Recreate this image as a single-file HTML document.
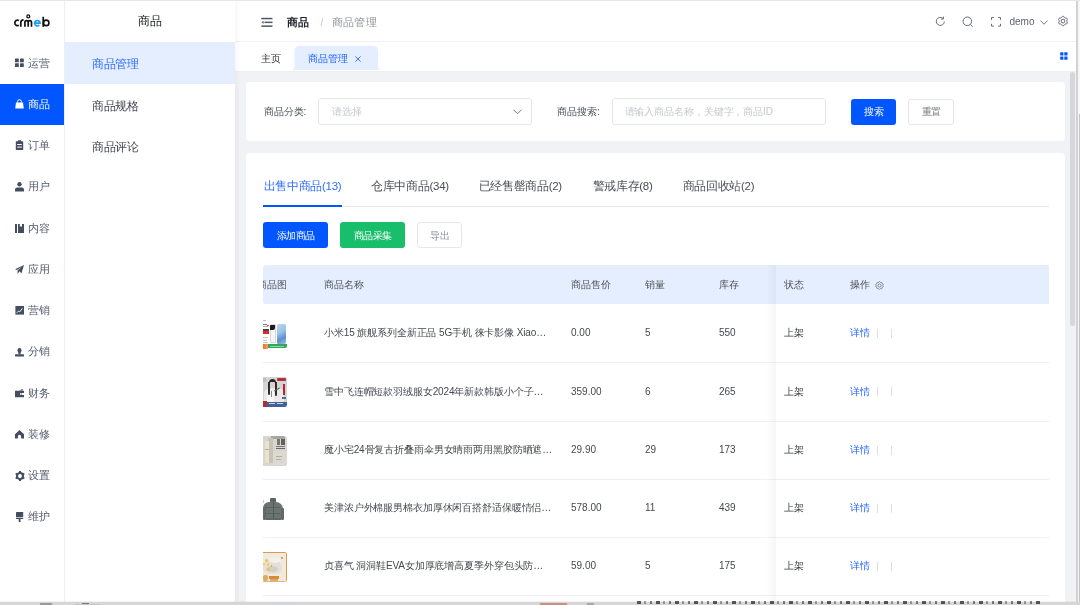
<!DOCTYPE html>
<html><head><meta charset="utf-8">
<style>
*{box-sizing:border-box;margin:0;padding:0}
html,body{width:1080px;height:605px;overflow:hidden;background:#f0f2f5;font-family:"Liberation Sans",sans-serif;color:#303133}
.a{position:absolute;white-space:nowrap;line-height:1}
#topline{position:absolute;left:0;top:0;width:1080px;height:1px;background:#e6e7e7;z-index:50}
#rail{position:absolute;left:0;top:0;width:65px;height:605px;background:#fff;border-right:1px solid #eef0f3}
#rail .it{position:absolute;left:0;width:64px;height:41.25px;color:#454d60;font-size:11px}
#rail .it.on{background:#0256ff;color:#fff}
#rail .it svg{position:absolute;left:15px;top:16px}
#rail .it span{position:absolute;left:28px;top:15.5px;line-height:11px;color:#535b6e}
#rail .it.on span{color:#fff}
#sub{position:absolute;left:65px;top:0;width:170px;height:605px;background:#fff;box-shadow:2px 0 5px rgba(0,0,0,.045);z-index:5}
#sub .t{position:absolute;left:0;top:15px;width:170px;text-align:center;font-size:12px;color:#15171a;line-height:12px}
#sub .m{position:absolute;left:0;width:170px;height:41.5px;font-size:11.5px;color:#40454e}
#sub .m span{position:absolute;left:27px;top:16px;line-height:12px;letter-spacing:-0.3px}
#sub .m.on{background:#e5eefe;color:#2d6cff}
#hdr{position:absolute;left:235px;top:1px;width:841px;height:41px;background:#fff;border-bottom:1px solid #f0f1f3}
#tabs{position:absolute;left:235px;top:42px;width:841px;height:28.6px;background:#fff;box-shadow:0 1px 2px rgba(0,0,0,.025)}
#rscroll{position:absolute;left:1076px;top:0;width:4px;height:605px;background:#f7f7f7;border-left:2px solid #d2d2d2}
#othumb{position:absolute;left:1078.8px;top:114px;width:1.2px;height:491px;background:#c4c4c4}
#thumb{position:absolute;left:1070px;top:72px;width:5px;height:254px;border-radius:3px;background:#d5d7dc}
.card{position:absolute;left:246px;width:819px;background:#fff;border-radius:4px}
.th{top:14.5px;font-size:10px;color:#50535a}
.row{left:0;width:785.5px;height:59.3px;border-bottom:1px solid #edf0f5}
.td{top:24.3px;font-size:10px;color:#45484e}
.nm{letter-spacing:-.12px}
.lk{color:#1f62ff}
.pipe{top:25px;width:1px;height:9px;background:#dcdfe6}
.img{position:absolute;left:-5.6px;top:15px;width:30px;height:30px;border-radius:2px;overflow:hidden;background:#fff}
.img b{position:absolute;display:block}
#bottom{position:absolute;left:0;top:601px;width:1080px;height:4px;background:linear-gradient(to bottom,rgba(216,216,216,.35) 0,rgba(216,216,216,.35) 1.5px,#d6d6d6 1.5px);z-index:60}
#rail,#sub,#hdr,#tabs,.card{will-change:transform}
</style></head><body>
<div id="topline"></div>

<div id="rail">
  <svg class="a" style="left:0;top:0" width="65" height="42" viewBox="0 0 65 42" fill="none" stroke-width="1.7">
    <path d="M18.9 20.5 A2.75 2.75 0 1 0 18.9 25.3" stroke="#111"/>
    <path d="M20.8 26.8 V22.6 Q20.8 19.95 23.6 19.95" stroke="#111"/>
    <path d="M24.9 26.8 V22.2 A1.65 1.65 0 0 1 28.2 22.2 V26.8 M28.2 22.2 A1.65 1.65 0 0 1 31.5 22.2 V26.8" stroke="#111"/>
    <circle cx="28.3" cy="16.4" r="1.45" stroke="#111" stroke-width="1.3"/>
    <path d="M34.6 23.1 H40.1 A2.75 2.75 0 1 0 39.3 25.2" stroke="#1c9ef1"/>
    <path d="M43.2 16.8 V26.8" stroke="#111"/>
    <circle cx="46.2" cy="22.9" r="2.7" stroke="#111"/>
  </svg>
  <div class="it" style="top:42px"><svg width="9" height="9" viewBox="0 0 9 9" fill="currentColor"><rect x="0" y="0.5" width="3.8" height="3.8" rx=".4"/><rect x="5" y="0.5" width="3.8" height="3.8" rx=".4"/><rect x="0" y="5.3" width="3.8" height="3.8" rx=".4"/><rect x="5" y="5.3" width="3.8" height="3.8" rx=".4"/></svg><span>运营</span></div>
  <div class="it on" style="top:83.6px;height:41px"><svg width="9" height="10" viewBox="0 0 9 10" fill="currentColor" style="top:15.5px"><path d="M2.6 3.6 V2.6 A1.9 1.9 0 0 1 6.4 2.6 V3.6" fill="none" stroke="#fff" stroke-width="1"/><path d="M1 3.6 H8 L8.8 9.6 H0.2 Z"/></svg><span>商品</span></div>
  <div class="it" style="top:124.5px"><svg width="9" height="10" viewBox="0 0 9 10" fill="currentColor" style="top:15.5px"><path d="M3 0.2 H6 V1.2 H7.6 Q8.2 1.2 8.2 1.8 V9.4 Q8.2 10 7.6 10 H1.4 Q0.8 10 0.8 9.4 V1.8 Q0.8 1.2 1.4 1.2 H3 Z"/><rect x="2.2" y="4" width="4.6" height="1" fill="#fff"/><rect x="2.2" y="6.6" width="4.6" height="1" fill="#fff"/></svg><span>订单</span></div>
  <div class="it" style="top:165.75px"><svg width="9" height="10" viewBox="0 0 9 10" fill="currentColor" style="top:16px"><circle cx="4.5" cy="2.3" r="2.2"/><path d="M0 9.4 V7.6 Q0 5.6 2.2 5.6 H6.8 Q9 5.6 9 7.6 V9.4 Z"/></svg><span>用户</span></div>
  <div class="it" style="top:207px"><svg width="9" height="9" viewBox="0 0 9 9" fill="currentColor" style="top:16.5px"><rect x="0" y="0" width="2" height="9"/><path d="M3 0 H4.8 V3 L5.9 2 L7 3 V0 H9 V9 H3 Z"/></svg><span>内容</span></div>
  <div class="it" style="top:248.25px"><svg width="9" height="9" viewBox="0 0 9 9" fill="currentColor" style="top:16.8px"><path d="M0 4.2 L9 0 L6.4 8.6 L4.6 6.2 L2.4 9 L2.6 5.6 L7.2 1.6 L2 4.9 Z"/></svg><span>应用</span></div>
  <div class="it" style="top:289.5px"><svg width="9" height="9" viewBox="0 0 9 9" style="top:16.8px"><rect x="0.4" y="0" width="8.6" height="8.6" fill="currentColor"/><path d="M1.8 6.8 L3.6 5 L4.8 5.8 L7.4 2.4" stroke="#fff" stroke-width=".9" fill="none"/></svg><span>营销</span></div>
  <div class="it" style="top:330.75px"><svg width="9" height="9" viewBox="0 0 9 9" fill="currentColor" style="top:16.8px"><ellipse cx="4.5" cy="2.4" rx="2" ry="2.4"/><rect x="3.4" y="4" width="2.2" height="2.4"/><rect x="0" y="6.2" width="9" height="2.4" rx=".5"/></svg><span>分销</span></div>
  <div class="it" style="top:372px"><svg width="9" height="9" viewBox="0 0 9 9" fill="currentColor" style="top:17px"><path d="M4 1.6 L7.5 0 L8 1.6 Z"/><path d="M0 1.8 H9 V8.2 H0 Z M6 4 Q5 4 5 5 Q5 6 6 6 H9 V4 Z" fill-rule="evenodd"/><circle cx="6.5" cy="5" r=".6"/></svg><span>财务</span></div>
  <div class="it" style="top:413.25px"><svg width="9" height="9" viewBox="0 0 9 9" fill="currentColor" style="top:16.5px"><path d="M4.5 0 L9 4.2 V8.6 H6.1 V6.4 A1.6 1.6 0 0 0 2.9 6.4 V8.6 H0 V4.2 Z"/></svg><span>装修</span></div>
  <div class="it" style="top:454.5px"><svg width="10" height="10" viewBox="0 0 10 10" style="top:16.3px;left:14.6px"><circle cx="5" cy="5" r="3" stroke="currentColor" stroke-width="2.1" fill="none"/><g fill="currentColor"><rect x="4" y="0" width="2" height="2"/><rect x="4" y="8" width="2" height="2"/><rect x="4" y="0" width="2" height="2" transform="rotate(60 5 5)"/><rect x="4" y="8" width="2" height="2" transform="rotate(60 5 5)"/><rect x="4" y="0" width="2" height="2" transform="rotate(120 5 5)"/><rect x="4" y="8" width="2" height="2" transform="rotate(120 5 5)"/></g></svg><span>设置</span></div>
  <div class="it" style="top:495.75px"><svg width="8" height="10" viewBox="0 0 8 10" fill="currentColor" style="top:16.3px;left:16px"><rect x="0" y="0" width="7.2" height="5.2" rx=".4"/><rect x="0" y="5.9" width="7.2" height="1.1"/><rect x="2.7" y="7" width="1.8" height="3"/></svg><span>维护</span></div>
</div>

<div id="sub">
  <div class="t">商品</div>
  <div class="m on" style="top:42px"><span>商品管理</span></div>
  <div class="m" style="top:83.5px"><span>商品规格</span></div>
  <div class="m" style="top:125px"><span>商品评论</span></div>
</div>

<div id="hdr">
  <svg class="a" style="left:26px;top:16px" width="12" height="11" viewBox="0 0 12 11" fill="#4e5969"><rect x="0.3" y="0.8" width="11.2" height="1.5"/><rect x="3.5" y="4.6" width="8" height="1.5"/><path d="M0.3 5.35 L2.6 3.9 V6.8 Z"/><rect x="0.3" y="8.4" width="11.2" height="1.5"/></svg>
  <span class="a" style="left:52px;top:16px;font-size:11px;font-weight:bold;color:#1d2129">商品</span>
  <span class="a" style="left:85.5px;top:16.5px;font-size:10px;color:#c0c4cc">/</span>
  <span class="a" style="left:96.5px;top:16px;font-size:11px;color:#909399;letter-spacing:.35px">商品管理</span>
  <svg class="a" style="left:699.5px;top:15.2px" width="11" height="11" viewBox="0 0 11 11" fill="none" stroke="#5f6671" stroke-width=".95"><path d="M9.3 5.5 A4 4 0 1 1 7.9 2.4"/><path d="M8.4 0.6 V3 H6" /></svg>
  <svg class="a" style="left:727.2px;top:14.8px" width="12" height="12" viewBox="0 0 12 12" fill="none" stroke="#5f6671" stroke-width=".95"><circle cx="5.3" cy="5.3" r="4.3"/><path d="M8.4 8.4 L10.6 10.6"/></svg>
  <svg class="a" style="left:755.8px;top:15.8px" width="11" height="10" viewBox="0 0 11 10" fill="none" stroke="#5f6671" stroke-width=".95"><path d="M0.5 2.8 V0.5 H2.8 M7.2 0.5 H9.5 V2.8 M9.5 6.8 V9.1 H7.2 M2.8 9.1 H0.5 V6.8"/></svg>
  <span class="a" style="left:774.5px;top:15.5px;font-size:10px;color:#5c6470">demo</span>
  <svg class="a" style="left:804.5px;top:18.5px" width="8" height="5" viewBox="0 0 8 5" fill="none" stroke="#5f6671" stroke-width=".85"><path d="M0.4 0.5 L4 4.2 L7.6 0.5"/></svg>
  <svg class="a" style="left:821.5px;top:14.3px" width="12" height="12" viewBox="0 0 12 12" fill="none" stroke="#5f6671" stroke-width=".95" stroke-linejoin="round"><path d="M5.38 1.34 L6.62 1.34 L7.47 2.49 L8.34 3.00 L9.77 3.16 L10.39 4.23 L9.82 5.55 L9.82 6.55 L10.39 7.87 L9.77 8.94 L8.34 9.10 L7.47 9.61 L6.62 10.76 L5.38 10.76 L4.53 9.61 L3.66 9.10 L2.23 8.94 L1.61 7.87 L2.18 6.55 L2.18 5.55 L1.61 4.23 L2.23 3.16 L3.66 3.00 L4.53 2.49 Z"/><circle cx="6" cy="6.05" r="1.9"/></svg>
</div>
<div id="tabs">
  <span class="a" style="left:25.6px;top:11.8px;font-size:10px;color:#303133">主页</span>
  <svg class="a" style="left:56px;top:3px" width="92" height="25" viewBox="0 0 92 25"><path d="M0 25 Q3 25 3.5 21 V6 Q3.5 0.8 9 0.8 H81.5 Q87 0.8 87 6 V21 Q87.5 25 91 25 Z" fill="#e5eefe"/></svg>
  <span class="a" style="left:72.8px;top:11.8px;font-size:10px;color:#2263ff">商品管理</span>
  <svg class="a" style="left:120px;top:13.5px" width="6" height="6" viewBox="0 0 6 6" stroke="#2d6cff" stroke-width=".9"><path d="M0.4 0.4 L5.6 5.6 M5.6 0.4 L0.4 5.6"/></svg>
  <svg class="a" style="left:824.5px;top:9.5px" width="8" height="8" viewBox="0 0 8 8" fill="#0256ff"><rect x="0.2" y="0.3" width="3.2" height="3.2" rx=".5"/><rect x="4.3" y="0.3" width="3.2" height="3.2" rx=".5"/><rect x="0.2" y="4.5" width="3.2" height="3.2" rx=".5"/><rect x="4.3" y="4.5" width="3.2" height="3.2" rx=".5"/></svg>
</div>

<div class="card" style="top:82px;height:59px">
  <span class="a" style="left:17.5px;top:24.5px;font-size:10px;color:#484d57">商品分类:</span>
  <div class="a" style="left:71.5px;top:16px;width:214px;height:26.5px;border:1px solid #e5e7eb;border-radius:3px"></div>
  <span class="a" style="left:85.5px;top:24.5px;font-size:10px;color:#c5c8ce">请选择</span>
  <svg class="a" style="left:267px;top:26.5px" width="9" height="6" viewBox="0 0 9 6" fill="none" stroke="#6b717c" stroke-width=".9"><path d="M0.4 0.6 L4.5 4.8 L8.6 0.6"/></svg>
  <span class="a" style="left:311px;top:24.5px;font-size:10px;color:#484d57">商品搜索:</span>
  <div class="a" style="left:365.5px;top:16px;width:214px;height:26.5px;border:1px solid #e5e7eb;border-radius:3px"></div>
  <span class="a" style="left:378.5px;top:24.5px;font-size:10px;color:#c5c8ce;letter-spacing:-.1px">请输入商品名称，关键字，商品ID</span>
  <div class="a" style="left:604.5px;top:17px;width:45.5px;height:25.8px;background:#0256ff;border-radius:3px"></div>
  <span class="a" style="left:618px;top:25px;font-size:10px;color:#fff;letter-spacing:-.4px">搜索</span>
  <div class="a" style="left:662px;top:17px;width:45.5px;height:25.8px;border:1px solid #e5e7eb;border-radius:3px"></div>
  <span class="a" style="left:675.5px;top:25px;font-size:10px;color:#73777e;letter-spacing:-.5px">重置</span>
</div>
<div class="card" style="top:153px;height:460px;overflow:hidden">
  <span class="a" style="left:17.5px;top:27.5px;font-size:11.5px;color:#2d6cff;letter-spacing:-.3px">出售中商品(13)</span>
  <span class="a" style="left:125px;top:27.5px;font-size:11.5px;color:#4b4e55;letter-spacing:-.3px">仓库中商品(34)</span>
  <span class="a" style="left:232.5px;top:27.5px;font-size:11.5px;color:#4b4e55;letter-spacing:-.3px">已经售罄商品(2)</span>
  <span class="a" style="left:346.5px;top:27.5px;font-size:11.5px;color:#4b4e55;letter-spacing:-.3px">警戒库存(8)</span>
  <span class="a" style="left:436.5px;top:27.5px;font-size:11.5px;color:#4b4e55;letter-spacing:-.3px">商品回收站(2)</span>
  <div class="a" style="left:17px;top:52.5px;width:785.5px;height:1px;background:#e4e7ed"></div>
  <div class="a" style="left:17px;top:52px;width:79px;height:2px;background:#0256ff"></div>
  <div class="a" style="left:17px;top:69px;width:65.2px;height:26px;background:#0256ff;border-radius:3px"></div>
  <span class="a" style="left:30.5px;top:78.3px;font-size:10px;color:#fff;letter-spacing:-.35px">添加商品</span>
  <div class="a" style="left:94px;top:69px;width:65.2px;height:26px;background:#19be6b;border-radius:3px"></div>
  <span class="a" style="left:107.5px;top:78.3px;font-size:10px;color:#fff;letter-spacing:-.35px">商品采集</span>
  <div class="a" style="left:171.4px;top:69px;width:45px;height:26px;border:1px solid #e4e7ed;border-radius:3px"></div>
  <span class="a" style="left:184px;top:78.3px;font-size:10px;color:#8a8e96">导出</span>
<div class="a" id="tbl" style="left:17px;top:112px;width:785.5px;height:350px;overflow:hidden">
  <div class="a" style="left:0;top:0;width:785.5px;height:39px;background:#e5eefe;border-radius:3px 0 0 3px"></div>
  <span class="a th" style="left:-6px">商品图</span>
  <span class="a th" style="left:61px">商品名称</span>
  <span class="a th" style="left:308px">商品售价</span>
  <span class="a th" style="left:382px">销量</span>
  <span class="a th" style="left:456px">库存</span>
  <span class="a th" style="left:521px">状态</span>
  <span class="a th" style="left:587px">操作</span>
  <svg class="a" style="left:612px;top:15.5px" width="9" height="9" viewBox="0 0 9 9" fill="none" stroke="#737780" stroke-width=".8"><path d="M4.5 0.5 L5.4 1.4 L6.8 1.3 L7 2.5 L8.3 3.3 L7.8 4.5 L8.3 5.7 L7 6.5 L6.8 7.7 L5.4 7.6 L4.5 8.5 L3.6 7.6 L2.2 7.7 L2 6.5 L0.7 5.7 L1.2 4.5 L0.7 3.3 L2 2.5 L2.2 1.3 L3.6 1.4 Z"/><circle cx="4.5" cy="4.5" r="1.6"/></svg>
  <div class="a row" style="top:39.0px"><div class="img i0"><b style="left:5.6px;top:1px;width:3px;height:1px;background:#bbb"></b><b style="left:5.6px;top:5px;width:4px;height:1px;background:#777"></b><b style="left:5.6px;top:6.5px;width:5px;height:.7px;background:#aaa"></b><b style="left:10px;top:6.3px;width:1.5px;height:1px;background:#e44"></b><b style="left:5.6px;top:9.5px;width:5.5px;height:2.5px;background:#444"></b><b style="left:5.6px;top:12px;width:5.5px;height:2.6px;background:#e2262c"></b><b style="left:5.6px;top:17.5px;width:5px;height:.7px;background:#c4c4c4"></b><b style="left:5.6px;top:20.5px;width:4px;height:.7px;background:#c4c4c4"></b><b style="left:5.6px;top:23px;width:5px;height:.7px;background:#c4c4c4"></b><b style="left:12.6px;top:5.4px;width:6px;height:18.8px;background:#f6f6f6;border:.5px solid #d8d8d8;border-radius:1px"></b><b style="left:12.9px;top:5.9px;width:4.6px;height:5.4px;background:#1b1b1b;border-radius:1px 0 2px 0"></b><b style="left:19.4px;top:4.8px;width:9.3px;height:20px;background:linear-gradient(150deg,#b9d6f2 0%,#9cc3ea 40%,#5c8fd0 70%,#9dc4ea 100%);border-radius:1.5px"></b><b style="left:10.6px;top:25px;width:19.4px;height:4.4px;background:#2fa957;border-radius:0 0 2px 0"></b><b style="left:13px;top:26.7px;width:14px;height:.9px;background:#8fd4a5"></b><b style="left:5.6px;top:24.5px;width:5px;height:5.5px;background:linear-gradient(90deg,#f36f2a,#f7a06a)"></b></div><span class="a td nm" style="left:61px">小米15 旗舰系列全新正品 5G手机 徕卡影像 Xiao…</span><span class="a td" style="left:308px">0.00</span><span class="a td" style="left:382px">5</span><span class="a td" style="left:456px">550</span><span class="a td" style="left:521px;color:#3d4045">上架</span><span class="a td lk" style="left:587px">详情</span><span class="a pipe" style="left:614px"></span><span class="a pipe" style="left:628px"></span></div>
  <div class="a row" style="top:97.3px"><div class="img i1"><b style="left:5.6px;top:0;width:24.4px;height:30px;background:#d3d4d8"></b><b style="left:6px;top:1px;width:2.5px;height:3.5px;background:#bcbdc2"></b><b style="left:7px;top:11px;width:20px;height:17px;background:#eceae8;border-radius:6px 6px 1px 1px"></b><b style="left:10px;top:14px;width:7px;height:11px;background:#f8f8f7;border-radius:2px"></b><b style="left:11.5px;top:1.5px;width:7px;height:6.5px;background:#27272a;border-radius:3.5px 3.5px 0 0"></b><b style="left:10.6px;top:5px;width:2.2px;height:12.5px;background:#2d2d30;border-radius:0 0 1px 1px"></b><b style="left:17.4px;top:5px;width:2.2px;height:13.5px;background:#2d2d30;border-radius:0 0 1px 1px"></b><b style="left:12.8px;top:4.6px;width:4.6px;height:5.2px;background:#e6cbc4;border-radius:1px 1px 2px 2px"></b><b style="left:14px;top:14px;width:1px;height:6px;background:#8a8a8e"></b><b style="left:17px;top:11.5px;width:6px;height:1.2px;background:#5a5a5e;transform:rotate(-30deg)"></b><b style="left:19.8px;top:.8px;width:8.6px;height:2.6px;background:#b8313a;border-radius:1px"></b><b style="left:26px;top:7px;width:1.8px;height:11px;background:#b0282f"></b><b style="left:24.8px;top:19.5px;width:3.6px;height:2.5px;background:#4b6c9e"></b><b style="left:10px;top:25px;width:20px;height:5px;background:#3f6297;border-radius:0 0 2px 0"></b><b style="left:12px;top:26.2px;width:6px;height:1px;background:#c9d3e3"></b><b style="left:20px;top:26.2px;width:6px;height:1px;background:#c9d3e3"></b><b style="left:5.6px;top:24px;width:3.6px;height:6px;background:#b82a30"></b></div><span class="a td nm" style="left:61px">雪中飞连帽短款羽绒服女2024年新款韩版小个子…</span><span class="a td" style="left:308px">359.00</span><span class="a td" style="left:382px">6</span><span class="a td" style="left:456px">265</span><span class="a td" style="left:521px;color:#3d4045">上架</span><span class="a td lk" style="left:587px">详情</span><span class="a pipe" style="left:614px"></span><span class="a pipe" style="left:628px"></span></div>
  <div class="a row" style="top:155.6px"><div class="img i2"><b style="left:5.6px;top:0;width:24.4px;height:30px;background:#d9d6cf;border-radius:0 2.5px 2.5px 0"></b><b style="left:14px;top:0;width:14px;height:3px;background:#aaa69f;border-radius:0 2px 0 0"></b><b style="left:11px;top:2px;width:5px;height:25px;background:#c7c3bb"></b><b style="left:7.2px;top:5px;width:4px;height:22px;background:#ebe2cc"></b><b style="left:7.2px;top:13px;width:4px;height:1px;background:#bfb29a"></b><b style="left:19.5px;top:3.5px;width:3px;height:5.5px;background:#555;opacity:.75"></b><b style="left:23.5px;top:3.5px;width:4px;height:5.5px;background:#444;opacity:.8"></b><b style="left:19px;top:10.5px;width:9px;height:.7px;background:#777"></b><b style="left:19px;top:12px;width:9px;height:.7px;background:#666"></b><b style="left:16px;top:15px;width:14px;height:15px;background:#dcd9d3;border-radius:0 0 2.5px 0"></b><b style="left:19px;top:20px;width:6px;height:.8px;background:#b7ad9d"></b><b style="left:19px;top:23px;width:5px;height:.8px;background:#b7ad9d"></b></div><span class="a td nm" style="left:61px">魔小宅24骨复古折叠雨伞男女晴雨两用黑胶防晒遮…</span><span class="a td" style="left:308px">29.90</span><span class="a td" style="left:382px">29</span><span class="a td" style="left:456px">173</span><span class="a td" style="left:521px;color:#3d4045">上架</span><span class="a td lk" style="left:587px">详情</span><span class="a pipe" style="left:614px"></span><span class="a pipe" style="left:628px"></span></div>
  <div class="a row" style="top:213.9px"><div class="img i3"><b style="left:5.6px;top:6px;width:.6px;height:3px;background:#ccc"></b><b style="left:12.5px;top:4.5px;width:6.5px;height:5px;background:#5e6565;border-radius:1px"></b><b style="left:6px;top:8px;width:20px;height:17.5px;background:#6c7373;border-radius:6px 7px 2px 2px"></b><b style="left:5.8px;top:14px;width:3.2px;height:12px;background:#626969;border-radius:1px"></b><b style="left:23.2px;top:14px;width:3.2px;height:12px;background:#626969;border-radius:1px"></b><b style="left:8px;top:13.5px;width:15px;height:.8px;background:#5a6161"></b><b style="left:8px;top:19px;width:15px;height:.8px;background:#5a6161"></b><b style="left:15.4px;top:8.5px;width:.7px;height:17px;background:#535a5a"></b><b style="left:8.5px;top:24px;width:15px;height:2px;background:#5f6666"></b></div><span class="a td nm" style="left:61px">美津浓户外棉服男棉衣加厚休闲百搭舒适保暖情侣…</span><span class="a td" style="left:308px">578.00</span><span class="a td" style="left:382px">11</span><span class="a td" style="left:456px">439</span><span class="a td" style="left:521px;color:#3d4045">上架</span><span class="a td lk" style="left:587px">详情</span><span class="a pipe" style="left:614px"></span><span class="a pipe" style="left:628px"></span></div>
  <div class="a row" style="top:272.2px"><div class="img i4"><b style="left:5.6px;top:0;width:24.4px;height:30px;background:#f0eadf;border-top:1.2px solid #d99a4e;border-right:1.3px solid #d99a4e;border-bottom:1px solid #e3b57a;border-radius:0 2px 2px 0"></b><b style="left:6px;top:8px;width:19px;height:14px;background:#e4e0d6;border-radius:45% 50% 35% 40%"></b><b style="left:12px;top:5px;width:12px;height:6px;background:#f3f1ea;border-radius:50%"></b><b style="left:9px;top:14px;width:12px;height:6px;background:#d4cfc3;border-radius:50%"></b><b style="left:8px;top:7px;width:3px;height:3px;background:#f0c64c;border-radius:50%"></b><b style="left:9.5px;top:11px;width:2.5px;height:2.5px;background:#f2cb55;border-radius:50%"></b><b style="left:10px;top:16px;width:2.6px;height:2.6px;background:#efc44a;border-radius:50%"></b><b style="left:5.6px;top:11px;width:1.8px;height:2px;background:#f0c64c;border-radius:50%"></b><b style="left:13.5px;top:13px;width:1.5px;height:1.5px;background:#e9886a;border-radius:50%"></b><b style="left:23.5px;top:5px;width:2.5px;height:2px;background:#d18c3d;border-radius:50%"></b><b style="left:5.6px;top:23px;width:5px;height:6px;background:#dba25c;border-radius:2px;opacity:.9"></b><b style="left:12px;top:23.5px;width:10px;height:3.5px;background:#d48c36"></b><b style="left:13px;top:27.2px;width:8px;height:1.2px;background:#e0aa6a"></b></div><span class="a td nm" style="left:61px">贞喜气 洞洞鞋EVA女加厚底增高夏季外穿包头防…</span><span class="a td" style="left:308px">59.00</span><span class="a td" style="left:382px">5</span><span class="a td" style="left:456px">175</span><span class="a td" style="left:521px;color:#3d4045">上架</span><span class="a td lk" style="left:587px">详情</span><span class="a pipe" style="left:614px"></span><span class="a pipe" style="left:628px"></span></div>
  <div class="a" style="left:503px;top:0;width:9px;height:350px;background:linear-gradient(to right,rgba(0,0,0,0),rgba(0,0,0,.035))"></div>
  <div class="a" style="left:511.7px;top:0;width:1px;height:350px;background:rgba(0,0,0,.03)"></div>
</div>
</div>

<div id="thumb"></div>
<div id="rscroll"></div><div id="othumb"></div>
<div id="bottom"><b style="position:absolute;left:40px;top:2px;width:12px;height:2.5px;background:#9a9a9a"></b><b style="position:absolute;left:82px;top:2px;width:7px;height:2.5px;background:#7a7a7a"></b><b style="position:absolute;left:75px;top:2.5px;width:25px;height:2px;background:#c8c6c0"></b><b style="position:absolute;left:272px;top:1.5px;width:27px;height:3px;background:#cfd6e0"></b><b style="position:absolute;left:540px;top:1.5px;width:27px;height:3px;background:#c78f85"></b><b style="position:absolute;left:587px;top:1.5px;width:7px;height:3px;background:#a8a8a8"></b><b style="position:absolute;left:637px;top:0;width:405px;height:2.6px;background:repeating-linear-gradient(90deg,rgba(40,40,40,.75) 0 4px,rgba(0,0,0,0) 4px 7px,rgba(60,60,60,.45) 7px 9px,rgba(0,0,0,0) 9px 13px,rgba(50,50,50,.6) 13px 15px,rgba(0,0,0,0) 15px 19px)"></b></div>
</body></html>
